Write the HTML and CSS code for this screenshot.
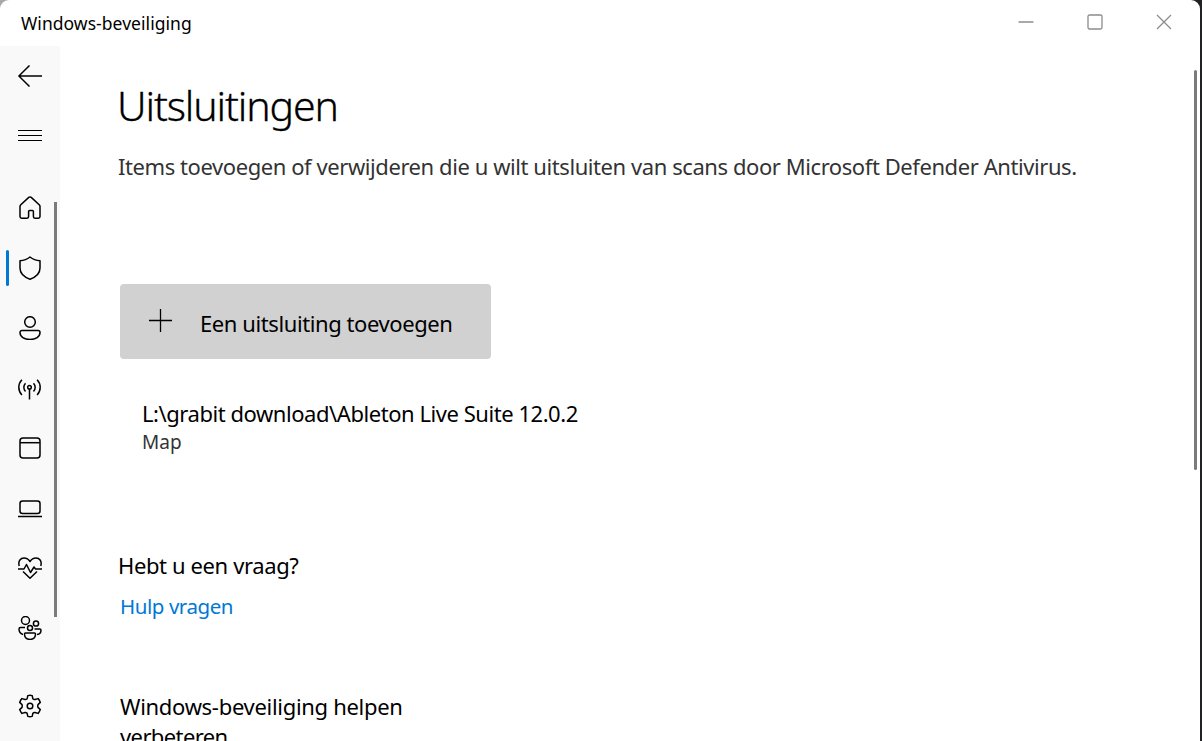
FILE: index.html
```html
<!DOCTYPE html>
<html lang="nl">
<head>
<meta charset="utf-8">
<title>Windows-beveiliging</title>
<link rel="stylesheet" href="styles.css">
</head>
<body>
<div class="window">
  <header class="titlebar">
    <span class="app-name">Windows-beveiliging</span>
    <div class="controls">
      <svg class="control" viewBox="0 0 16 16"><path d="M0.500 8h15"/></svg>
      <svg class="control" viewBox="0 0 16 16"><rect x="1" y="1" width="14" height="14" rx="1.500"/></svg>
      <svg class="control" viewBox="0 0 16 16"><path d="M1 1l14 14M15 1L1 15"/></svg>
    </div>
  </header>
  <div class="body">
    <nav class="sidebar">
      <a class="nav-item"><svg class="icon" viewBox="0 0 24 24"><path d="M24 12H.8M11.500 1.500L.9 12l10.600 10.500"/></svg></a>
      <a class="nav-item menu"><svg class="icon crisp" viewBox="0 0 24 24"><path d="M0 6.500h24M0 11.500h24M0 16.500h24"/></svg></a>
      <div class="nav-list">
        <a class="nav-item"><svg class="icon" viewBox="0 0 24 24"><path d="M2 10.600c0-.7.3-1.300.8-1.800l7.700-7.200a2.100 2.100 0 0 1 3 0l7.700 7.200c.5.5.8 1.100.8 1.800v9.900a1.700 1.700 0 0 1-1.700 1.700h-3.300a1.600 1.600 0 0 1-1.600-1.600v-5a1 1 0 0 0-1-1h-2.800a1 1 0 0 0-1 1v5a1.600 1.600 0 0 1-1.600 1.600H3.700A1.700 1.700 0 0 1 2 20.500z"/></svg></a>
        <a class="nav-item active"><svg class="icon" viewBox="0 0 24 24"><path d="M12 1c2.700 2.200 6 3.500 10 3.700v7.300c0 5.300-3.300 8.800-10 11.200C5.300 20.800 2 17.300 2 12V4.700C6 4.500 9.300 3.200 12 1z"/></svg></a>
        <a class="nav-item"><svg class="icon" viewBox="0 0 24 24"><circle cx="12" cy="6" r="5.300"/><path d="M4 14.500h16a2 2 0 0 1 2 2c0 4.300-4.200 7-10 7s-10-2.700-10-7a2 2 0 0 1 2-2z"/></svg></a>
        <a class="nav-item"><svg class="icon" viewBox="0 0 24 24"><circle cx="11.500" cy="11.200" r="1.800"/><path d="M11.500 13v10.500M7.500 7.200a6 6 0 0 0 0 8.300M15.500 7.200a6 6 0 0 1 0 8.300M3.900 3.700a11 11 0 0 0 0 15.300M19.100 3.700a11 11 0 0 1 0 15.300"/></svg></a>
        <a class="nav-item"><svg class="icon" viewBox="0 0 24 24"><rect x="2" y="2" width="20" height="20" rx="3"/><path d="M2 6.700h20"/></svg></a>
        <a class="nav-item"><svg class="icon" viewBox="0 0 24 24"><rect x="2" y="5" width="20" height="12.500" rx="2.500"/><path d="M0 20.500h24"/></svg></a>
        <a class="nav-item"><svg class="icon" viewBox="0 0 24 24"><path d="M1.200 10C-.2 4.500 2.800 2 6 2c2.600 0 4.600 1.300 6 3.500C13.400 3.300 15.400 2 18 2c3.200 0 6.200 2.500 4.800 8M0 13h6l2.500-4.500 4 8 3.500-5.500 1.500 2H24M5 15.500l7 6.700 7-6.700"/></svg></a>
        <a class="nav-item"><svg class="icon" viewBox="0 0 24 24"><circle cx="7.500" cy="4.500" r="4"/><circle cx="18" cy="7.500" r="2.600"/><circle cx="12" cy="12" r="2.500"/><path d="M7 11.500H2.500A1.600 1.600 0 0 0 1 13c0 2.700 1.500 4.800 4 5.500M16.500 13h5.200c.8 0 1.300.5 1.300 1.200 0 2.300-1.700 4-4 4.300M7.500 17h9c.6 0 1 .4 1 1 0 3.200-2.200 5.400-5.500 5.400S6.500 21.200 6.500 18c0-.6.400-1 1-1z"/></svg></a>
      </div>
      <a class="nav-item settings"><svg class="icon" viewBox="0 0 24 24"><circle cx="12" cy="12" r="2.800"/><path d="M9.800 1.600Q12 1 14.200 1.600L14.900 4.800Q15.800 5.700 17 5.500L20.100 4.600Q21.500 6.200 22.300 8.400L20 10.600Q19.400 12 20 13.400L22.300 15.600Q21.500 17.800 20.100 19.400L17 18.500Q15.800 18.300 14.900 19.200L14.200 22.400Q12 23 9.800 22.400L9.100 19.200Q8.200 18.300 7 18.500L3.900 19.400Q2.500 17.800 1.700 15.600L4 13.400Q4.600 12 4 10.600L1.700 8.400Q2.500 6.200 3.900 4.600L7 5.500Q8.200 5.700 9.100 4.800Z"/></svg></a>
      <span class="nav-scroll"></span>
    </nav>
    <main class="content">
      <h1 class="heading">Uitsluitingen</h1>
      <p class="description">Items toevoegen of verwijderen die u wilt uitsluiten van scans door Microsoft Defender Antivirus.</p>
      <button class="add"><svg class="plus" viewBox="0 0 24 24"><path d="M0 11.500h23M11.500 0v23"/></svg><span class="add-label">Een uitsluiting toevoegen</span></button>
      <div class="exclusion">
        <div class="path">L:\grabit download\Ableton Live Suite 12.0.2</div>
        <div class="kind">Map</div>
      </div>
      <h2 class="question">Hebt u een vraag?</h2>
      <a class="help">Hulp vragen</a>
      <h2 class="improve">Windows-beveiliging helpen<br><span class="improve-end">verbeteren</span></h2>
    </main>
    <span class="page-scroll"></span>
  </div>
</div>
</body>
</html>
```

FILE: styles.css
```css
* { box-sizing: border-box; }
body {
  margin: 0;
  height: 741px;
  overflow: hidden;
  background: linear-gradient(90deg, #a8a8a8 50%, #202224 50%);
  font-family: "Noto Sans", "Open Sans", sans-serif;
  color: #000;
}
h1, h2, p { margin: 0; font-weight: 400; }
.window {
  width: 1200px;
  height: 741px;
  display: flex;
  flex-direction: column;
  overflow: hidden;
  background: #fff;
  border-radius: 9px 9px 0 0;
}
.titlebar {
  flex: none;
  height: 46px;
  display: flex;
  justify-content: space-between;
  padding: 0 28px 0 21px;
}
.app-name { font-size: 17.500px; line-height: 46px; letter-spacing: 0.05px; }
.controls { display: flex; gap: 53px; padding-top: 13.500px; }
.control { width: 16px; height: 16px; fill: none; stroke: #8c8c8c; stroke-width: 1.300; }
.body { flex: 1; min-height: 0; display: flex; position: relative; }
.sidebar {
  width: 60px;
  flex: none;
  background: #f9f9f9;
  position: relative;
}
.nav-item { display: flex; align-items: center; justify-content: center; height: 60px; position: relative; }
.menu { height: 59px; }
.nav-list { margin-top: 13px; }
.settings { margin-top: 18px; }
.icon { width: 24px; height: 24px; fill: none; stroke: #000; stroke-width: 1.500; stroke-linejoin: round; }
.crisp { stroke-width: 1; shape-rendering: crispEdges; }
.active::before {
  content: "";
  position: absolute;
  left: 6px;
  top: 12px;
  width: 3px;
  height: 36px;
  border-radius: 2px;
  background: #0078d4;
}
.nav-scroll { position: absolute; left: 54px; top: 156px; width: 3px; height: 415px; background: #7b7b7b; }
.page-scroll { position: absolute; right: 3px; top: 24px; width: 3px; height: 400px; border-radius: 2px; background: #7b7b7b; }
.content { flex: 1; padding: 34px 0 0 58px; white-space: nowrap; }
.heading {
  font-size: 41px;
  font-weight: 300;
  line-height: 50px;
  letter-spacing: -1.120px;
  margin-left: -1px;
  -webkit-text-stroke: 0.3px #000;
}
.description { font-size: 22px; line-height: 30px; letter-spacing: -0.425px; margin-top: 21px; color: #333; }
.add {
  display: flex;
  width: 371px;
  height: 75px;
  margin: 103px 0 0 2px;
  padding: 0 0 0 29px;
  border: 0;
  border-radius: 4px;
  background: #d1d1d1;
  font: inherit;
  color: #000;
}
.plus { width: 24px; height: 24px; margin: 25px 27px 0 0; fill: none; stroke: #000; stroke-width: 1.300; }
.add-label { font-size: 22px; line-height: 30px; letter-spacing: -0.410px; margin-top: 24px; }
.exclusion { margin: 39px 0 0 24px; }
.path { font-size: 22px; line-height: 30px; letter-spacing: -0.450px; }
.kind { font-size: 19px; line-height: 28px; color: #333; }
.question { font-size: 22px; line-height: 30px; letter-spacing: -0.380px; margin-top: 94px; }
.help { display: block; font-size: 20.500px; line-height: 30px; letter-spacing: -0.440px; margin: 11px 0 0 2px; color: #0078d4; }
.improve { font-size: 22px; line-height: 30px; letter-spacing: -0.300px; margin: 70px 0 0 2px; }
.improve-end { letter-spacing: -0.600px; }
```
